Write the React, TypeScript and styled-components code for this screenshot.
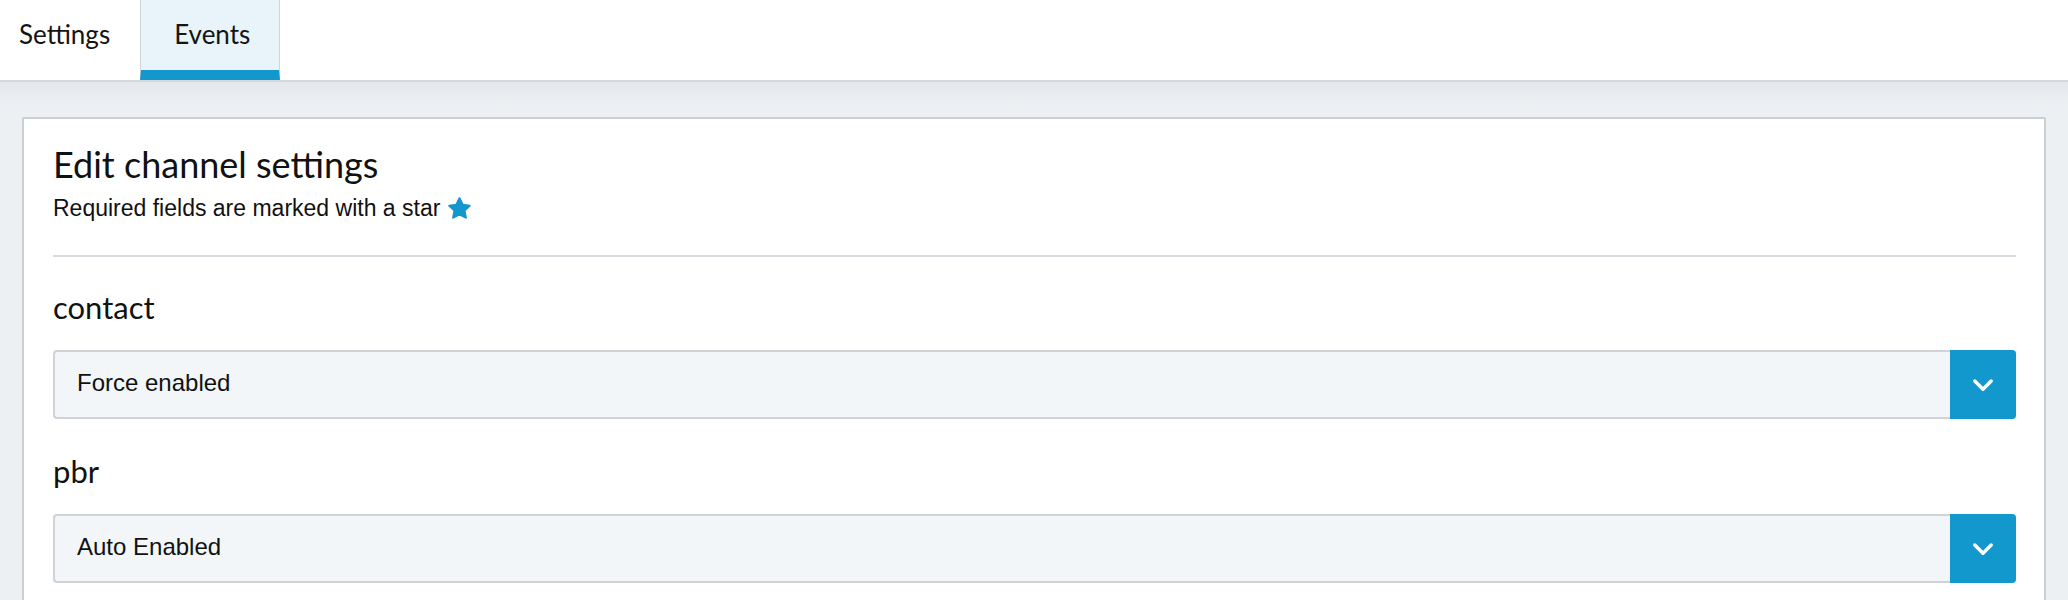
import styled, { createGlobalStyle } from 'styled-components'

const GlobalStyle = createGlobalStyle`
	html, body {
		margin: 0;
		height: 100%;
		overflow: hidden;
	}
	body {
		font-family: Lato, "Noto Sans", sans-serif;
		color: #141414;
		background: #ffffff;
	}
	#root {
		height: 100%;
	}
`

const fields = [
	{ label: 'contact', value: 'Force enabled' },
	{ label: 'pbr', value: 'Auto Enabled' },
]

function StarIcon() {
	return (
		<S.Star viewBox="0 0 24 24" aria-hidden="true">
			<path
				d="M12 2.2l3 6.2 6.8.9-5 4.7 1.3 6.8L12 17.5l-6.1 3.3 1.3-6.8-5-4.7 6.8-.9z"
				fill="currentColor"
				stroke="currentColor"
				strokeWidth="2"
				strokeLinejoin="round"
			/>
		</S.Star>
	)
}

function Chevron() {
	return (
		<svg width="24" height="24" viewBox="0 0 24 24" aria-hidden="true">
			<path
				d="M3.8 8 L12 16.2 L20.2 8"
				fill="none"
				stroke="#ffffff"
				strokeWidth="3.4"
				strokeLinecap="round"
				strokeLinejoin="round"
			/>
		</svg>
	)
}

export default function App() {
	return (
		<S.Page>
			<GlobalStyle />
			<S.TabBar>
				<S.Tab>Settings</S.Tab>
				<S.Tab $active>Events</S.Tab>
			</S.TabBar>
			<S.Body>
				<S.Card>
					<S.Title>Edit channel settings</S.Title>
					<S.Hint>
						Required fields are marked with a star <StarIcon />
					</S.Hint>
					<S.Divider />
					{fields.map((field) => (
						<S.Field key={field.label}>
							<S.Label>{field.label}</S.Label>
							<S.Select>
								<S.SelectValue>{field.value}</S.SelectValue>
								<S.SelectButton>
									<Chevron />
								</S.SelectButton>
							</S.Select>
						</S.Field>
					))}
				</S.Card>
			</S.Body>
		</S.Page>
	)
}

const Page = styled.div`
	display: flex;
	flex-direction: column;
	height: 100%;
`

const TabBar = styled.div`
	display: flex;
	height: 80px;
	background: #ffffff;
	border-bottom: 2px solid #d4d8dc;
	flex-shrink: 0;
`

const Tab = styled.div<{ $active?: boolean }>`
	box-sizing: border-box;
	display: flex;
	align-items: center;
	padding: 0 29px 3px 33px;
	font-size: 26px;
	line-height: 30px;
	color: #141414;
	border-left: 1px solid ${(p) => (p.$active ? '#cfd6db' : 'transparent')};
	border-right: 1px solid ${(p) => (p.$active ? '#cfd6db' : 'transparent')};
	border-bottom: 10px solid ${(p) => (p.$active ? '#1398cd' : 'transparent')};
	background: ${(p) => (p.$active ? '#e8f4fa' : 'transparent')};

	&:first-child {
		padding-left: 19px;
		border-left: none;
	}
`

const Body = styled.div`
	flex: 1;
	padding: 35px 22px 0;
	background: linear-gradient(#e3e7eb, #edf0f3 22px, #edf0f3);
	overflow: hidden;
`

const Card = styled.div`
	background: #ffffff;
	border: 2px solid #cacfd3;
	border-bottom: none;
	border-radius: 2px 2px 0 0;
	padding: 25px 28px 0 29px;
	min-height: 600px;
`

const Title = styled.h1`
	margin: 0;
	font-family: Lato, "Noto Sans", sans-serif;
	font-weight: 400;
	font-size: 36px;
	line-height: 40px;
	color: #111111;
`

const Hint = styled.p`
	margin: 11px 0 0;
	font-family: "Liberation Sans", Arial, sans-serif;
	font-size: 23px;
	line-height: 26px;
	color: #111111;
`

const Star = styled.svg`
	width: 25px;
	height: 25px;
	color: #1497cd;
	vertical-align: -5px;
`

const Divider = styled.hr`
	margin: 34px 0 0;
	border: none;
	height: 2px;
	background: #d6d9dd;
`

const Field = styled.div`
	margin-top: 32px;

	& + & {
		margin-top: 34px;
	}
`

const Label = styled.div`
	font-size: 31px;
	line-height: 36px;
	color: #111111;
	margin-bottom: 25px;
`

const Select = styled.div`
	display: flex;
	height: 69px;
	box-sizing: border-box;
	border-radius: 4px;
	background: #f2f6f9;
	border: 2px solid #cfd3d8;
	border-right: none;
`

const SelectValue = styled.div`
	flex: 1;
	display: flex;
	align-items: center;
	padding: 0 0 4px 22px;
	font-family: "Liberation Sans", Arial, sans-serif;
	font-size: 24px;
	color: #111111;
`

const SelectButton = styled.div`
	width: 66px;
	margin: -2px 0;
	display: flex;
	align-items: center;
	justify-content: center;
	background: #1398cd;
	border-radius: 0 4px 4px 0;
`

const S = {
	Page,
	TabBar,
	Tab,
	Body,
	Card,
	Title,
	Hint,
	Star,
	Divider,
	Field,
	Label,
	Select,
	SelectValue,
	SelectButton,
}
